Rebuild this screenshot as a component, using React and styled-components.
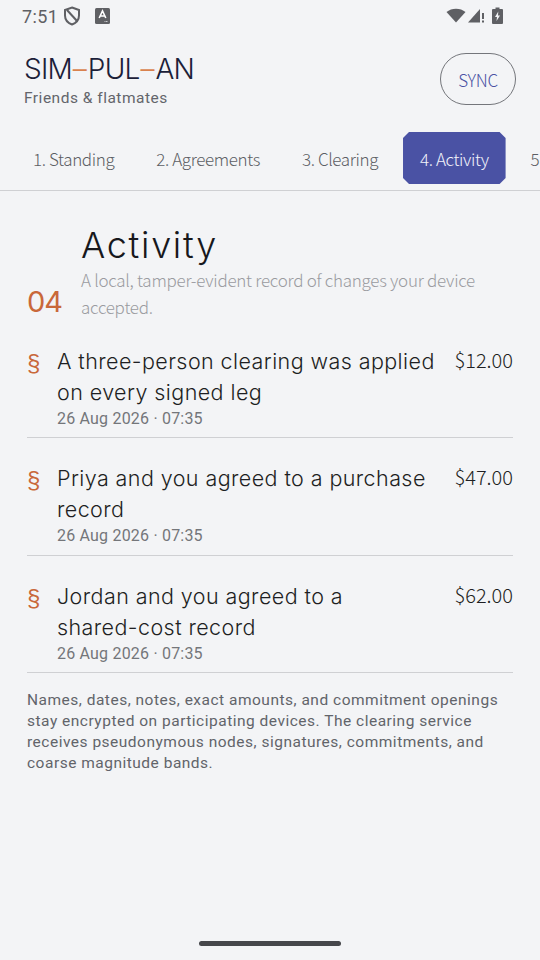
import React from "react";
import styled, { createGlobalStyle } from "styled-components";

const GlobalStyle = createGlobalStyle`
  html, body { margin: 0; padding: 0; background: #f3f4f6; }
  * { box-sizing: border-box; }
`;

const SOURCE = `"Noto Sans CJK SC", "Lato", sans-serif`;
const GROTESK = `"Inter", "Liberation Sans", sans-serif`;

const Page = styled.div`
  width: 540px;
  height: 960px;
  background: #f3f4f6;
  overflow: hidden;
  position: relative;
  font-family: "Roboto", sans-serif;
`;

const StatusBar = styled.div`
  height: 32px;
  padding: 0 37px 0 22px;
  display: flex;
  align-items: center;
  justify-content: space-between;
  color: #5f6064;
`;

const StatusGroup = styled.div`
  display: flex;
  align-items: center;
  padding-bottom: ${(p) => p.$lift || 0}px;
`;

const Clock = styled.span`
  font-size: 18px;
  letter-spacing: 0.4px;
  margin-right: 5px;
`;

const Header = styled.header`
  display: flex;
  justify-content: space-between;
  align-items: flex-start;
  padding: 21px 24px 0;
  height: 100px;
`;

const Brand = styled.div`
  padding-top: 1px;
`;

const Logo = styled.div`
  font-family: "Inter", sans-serif;
  font-weight: 300;
  font-size: 28px;
  line-height: 30px;
  color: #1b2038;
  display: flex;
  letter-spacing: -0.8px;
`;

const Dash = styled.span`
  color: #d9824f;
  letter-spacing: 0;
  padding: 0 1px;
`;

const Sub = styled.div`
  font-size: 15.5px;
  line-height: 20px;
  margin-top: 4px;
  color: #63656b;
  letter-spacing: 0.5px;
`;

const SyncButton = styled.button`
  width: 76px;
  height: 52px;
  border-radius: 26px;
  border: 1.75px solid #74767b;
  background: transparent;
  color: #4a52a4;
  font-family: ${SOURCE};
  font-weight: 300;
  font-size: 17px;
  letter-spacing: -0.3px;
  padding: 0;
`;

const Tabs = styled.nav`
  display: flex;
  gap: 8px;
  padding: 0 0 6px 16px;
  border-bottom: 1.5px solid #cfd0d3;
  height: 59px;
  overflow: hidden;
`;

const Tab = styled.div`
  flex: none;
  height: 52px;
  padding: 0 17px;
  display: flex;
  align-items: center;
  font-family: ${SOURCE};
  font-weight: 300;
  font-size: 17px;
  letter-spacing: -0.38px;
  color: ${(p) => (p.$active ? "#f2f3fa" : "#5c5e64")};
  background: ${(p) => (p.$active ? "#4a52a4" : "transparent")};
  clip-path: polygon(6px 0, calc(100% - 6px) 0, 100% 6px, 100% calc(100% - 6px), calc(100% - 6px) 100%, 6px 100%, 0 calc(100% - 6px), 0 6px);
`;

const Content = styled.main`
  padding: 33px 27px 0;
`;

const SectionHead = styled.div`
  display: grid;
  grid-template-columns: 54px 1fr;
  align-items: end;
`;

const SectionNumber = styled.div`
  font-family: ${GROTESK};
  font-weight: 400;
  font-size: 29px;
  line-height: 36px;
  color: #c9683a;
  letter-spacing: -1px;
`;

const SectionTitle = styled.h1`
  margin: 0;
  font-family: ${GROTESK};
  font-weight: 300;
  font-size: 36px;
  line-height: 42px;
  color: #17181c;
  letter-spacing: 1.7px;
`;

const SectionDesc = styled.p`
  margin: 0;
  font-family: ${SOURCE};
  font-weight: 300;
  font-size: 17px;
  line-height: 27px;
  color: #9a9ba0;
  letter-spacing: -0.27px;
`;

const Row = styled.div`
  display: grid;
  grid-template-columns: 30px 1fr auto;
  height: ${(p) => (p.$first ? 118 : 117.5)}px;
  border-bottom: 1.5px solid #cfd0d3;
  padding-top: ${(p) => (p.$first ? 26 : 25)}px;
`;

const Mark = styled.span`
  font-family: "Liberation Sans", sans-serif;
  font-size: 24px;
  line-height: 34px;
  color: #c9683a;
`;

const RowTitle = styled.div`
  font-family: ${GROTESK};
  font-weight: 300;
  font-size: 21.5px;
  line-height: 31px;
  color: #1e1f23;
  letter-spacing: 0.42px;
  width: 385px;
`;

const NoBreak = styled.span`
  white-space: nowrap;
`;

const RowDate = styled.div`
  font-size: 16px;
  line-height: 21px;
  color: #74767a;
  letter-spacing: 0.2px;
`;

const Amount = styled.div`
  font-family: ${SOURCE};
  font-weight: 300;
  font-size: 20px;
  line-height: 28px;
  color: #1e1f23;
`;

const Note = styled.p`
  margin: 17px 0 0;
  font-size: 15.5px;
  line-height: 21px;
  color: #62646a;
  letter-spacing: 0.5px;
`;

const NavPill = styled.div`
  position: absolute;
  left: 199px;
  bottom: 14px;
  width: 142px;
  height: 5px;
  border-radius: 3px;
  background: #46474b;
`;

const rows = [
  { title: "A three-person clearing was applied on every signed leg", amount: "$12.00" },
  { title: "Priya and you agreed to a purchase record", amount: "$47.00" },
  { title: <>Jordan and you agreed to a <NoBreak>shared-cost</NoBreak> record</>, amount: "$62.00" },
];

const tabs = ["1. Standing", "2. Agreements", "3. Clearing", "4. Activity", "5"];

const ShieldIcon = () => (
  <svg width="18" height="20" viewBox="0 0 18 20" fill="none" stroke="#5f6064" strokeWidth="2">
    <path d="M9 1.5 L16 4 V9.5 C16 14 13 17 9 18.5 C5 17 2 14 2 9.5 V4 Z" />
    <path d="M4 4 L14 15" />
  </svg>
);

const AppIcon = () => (
  <svg width="15" height="16" viewBox="0 0 15 16" style={{ marginLeft: 14 }}>
    <rect width="15" height="16" rx="1.5" fill="#5f6064" />
    <path d="M4.2 10 L7.5 3 L10.8 10 M5.4 8 H9.6" stroke="#fff" strokeWidth="1.6" fill="none" />
    <path d="M9.5 13.5 H13" stroke="#c8c9cc" strokeWidth="1" strokeDasharray="1 0.5" />
  </svg>
);

const WifiIcon = () => (
  <svg width="20" height="16" viewBox="0 0 20 16">
    <path d="M0.5 5 C5.5 0.5 14.5 0.5 19.5 5 L10 15.5 Z" fill="#5f6064" />
  </svg>
);

const SignalIcon = () => (
  <svg width="17" height="16" viewBox="0 0 17 16" style={{ margin: "0 7px 0 2px" }}>
    <path d="M0 15.5 L12 2 V15.5 Z" fill="#5f6064" />
    <rect x="14" y="6" width="2" height="6" fill="#5f6064" />
    <rect x="14" y="13.5" width="2" height="2" fill="#5f6064" />
  </svg>
);

const BatteryIcon = () => (
  <svg width="11" height="17" viewBox="0 0 11 17">
    <path d="M3.5 0.5 H7.5 V2 H10 a1 1 0 0 1 1 1 V16 a1 1 0 0 1 -1 1 H1 a1 1 0 0 1 -1 -1 V3 a1 1 0 0 1 1 -1 H3.5 Z" fill="#5f6064" />
    <path d="M6.3 4.5 L3 10 H5 L4.5 14 L8 8.5 H6 Z" fill="#f3f4f6" />
  </svg>
);

export default function App() {
  return (
    <Page>
      <GlobalStyle />
      <StatusBar>
        <StatusGroup>
          <Clock>7:51</Clock>
          <ShieldIcon />
          <AppIcon />
        </StatusGroup>
        <StatusGroup $lift={2}>
          <WifiIcon />
          <SignalIcon />
          <BatteryIcon />
        </StatusGroup>
      </StatusBar>
      <Header>
        <Brand>
          <Logo>
            SIM<Dash>–</Dash>PUL<Dash>–</Dash>AN
          </Logo>
          <Sub>Friends &amp; flatmates</Sub>
        </Brand>
        <SyncButton>SYNC</SyncButton>
      </Header>
      <Tabs>
        {tabs.map((t, i) => (
          <Tab key={t} $active={i === 3}>{t}</Tab>
        ))}
      </Tabs>
      <Content>
        <SectionHead>
          <SectionNumber>04</SectionNumber>
          <div>
            <SectionTitle>Activity</SectionTitle>
            <SectionDesc>A local, tamper-evident record of changes your device accepted.</SectionDesc>
          </div>
        </SectionHead>
        {rows.map((r, i) => (
          <Row key={r.amount} $first={i === 0}>
            <Mark>§</Mark>
            <div>
              <RowTitle>{r.title}</RowTitle>
              <RowDate>26 Aug 2026 · 07:35</RowDate>
            </div>
            <Amount>{r.amount}</Amount>
          </Row>
        ))}
        <Note>
          Names, dates, notes, exact amounts, and commitment openings stay encrypted on participating devices. The clearing service receives pseudonymous nodes, signatures, commitments, and coarse magnitude bands.
        </Note>
      </Content>
      <NavPill />
    </Page>
  );
}
